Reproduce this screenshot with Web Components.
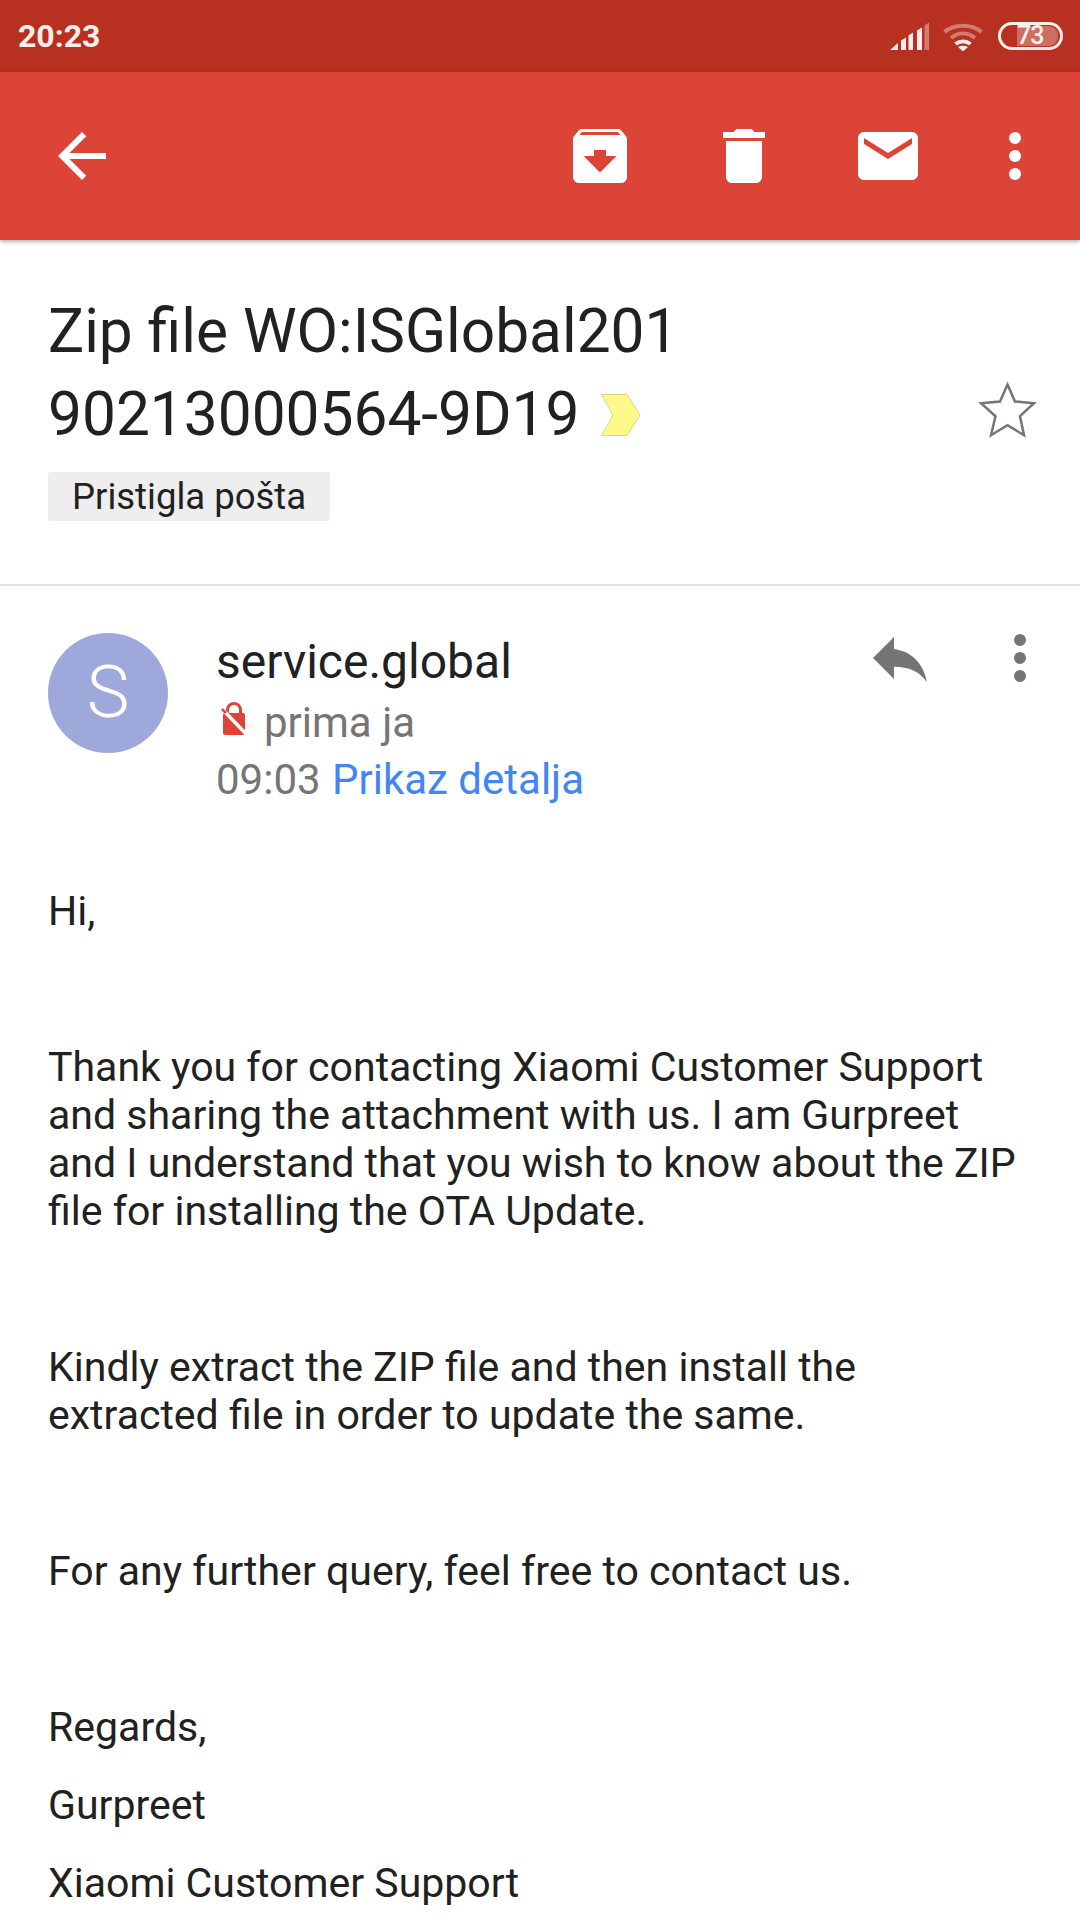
<!DOCTYPE html>
<html><head><meta charset="utf-8"><style>
html,body{margin:0;padding:0;background:#fff;width:1080px;height:1920px;overflow:hidden}
body{font-family:Roboto,"Liberation Sans",sans-serif}
</style></head><body>
<mail-screen></mail-screen>
<script>
const def=(n,html)=>customElements.define(n,class extends HTMLElement{constructor(){super();this.attachShadow({mode:'open'}).innerHTML=html}});
const dots=(c)=>`<svg width="72" height="72" viewBox="0 0 72 72" fill="${c}"><circle cx="36" cy="18" r="6"/><circle cx="36" cy="36" r="6"/><circle cx="36" cy="54" r="6"/></svg>`;
def('status-bar',`<style>
:host{display:flex;align-items:center;height:72px;background:#b8301f;color:#fbeeec;box-sizing:border-box;padding:0 17px 0 18px}
.t{font:700 32px Roboto,sans-serif;flex:1}
svg{display:block}
.sig{margin-right:13px}.wifi{margin-right:15px}
.bat{position:relative;width:65px;height:28px;box-sizing:border-box;border:3px solid #fbeeec;border-radius:14px}
.bat i{position:absolute;left:16px;right:2px;top:1px;bottom:1px;background:rgba(255,255,255,.3);border-radius:0 9px 9px 0}
.bat b{position:absolute;left:16px;top:1px;font:500 25px/20px Roboto,sans-serif;letter-spacing:-1px;color:#fbeeec}
</style><span class="t">20:23</span>
<svg class="sig" width="40" height="30" viewBox="0 0 40 30" fill="#fbeeec"><path d="M0 29l8-7v7zM11 19.500l5-3V29h-5zM18.500 14.500l4.500-3V29h-4.500zM27 9.500l5-3V29h-5z"/><path d="M34.500 4.500l4.500-3V29h-4.500z" fill-opacity=".4"/></svg>
<svg class="wifi" width="40" height="30" viewBox="0 0 40 30" fill="none" stroke="#fbeeec" stroke-width="4"><path d="M1.500 11C11 2.500 29 2.500 38.500 11" stroke-opacity=".4"/><path d="M8 17c7.500-6 16.500-6 24 0" stroke-opacity=".4"/><path d="M12.500 23c4.500-3.500 10.500-3.500 15 0"/><path d="M20 30.500l-5-4.500c3-1.700 7-1.700 10 0z" fill="#fbeeec" stroke="none"/></svg>
<span class="bat"><i></i><b>73</b></span>`);
def('tool-bar',`<style>
:host{display:flex;align-items:center;height:168px;background:#dd4438;padding-left:46px;padding-right:29px;box-sizing:border-box;position:relative;box-shadow:0 2px 4px rgba(0,0,0,.3)}
svg{display:block;flex:none}.s{flex:1}.g{margin-left:72px}.m{margin-left:55px}
</style>
<svg width="72" height="72" viewBox="0 0 24 24" fill="#fff"><path d="M20 11H7.830l5.590-5.590L12 4l-8 8 8 8 1.410-1.410L7.830 13H20v-2z"/></svg><span class="s"></span>
<svg width="72" height="72" viewBox="0 0 24 24" fill="#fff"><path d="M20.540 5.230l-1.390-1.680C18.880 3.210 18.470 3 18 3H6c-.47 0-.88.21-1.160.55L3.460 5.230C3.170 5.570 3 6.020 3 6.500V19c0 1.100.9 2 2 2h14c1.100 0 2-.9 2-2V6.500c0-.48-.17-.93-.46-1.270zM12 17.500L6.500 12H10v-2h4v2h3.500L12 17.500zM5.120 5l.81-1h12l.94 1H5.120z"/></svg>
<svg class="g" width="72" height="72" viewBox="0 0 24 24" fill="#fff"><path d="M6 19c0 1.100.9 2 2 2h8c1.100 0 2-.9 2-2V7H6v12zM19 4h-3.500l-1-1h-5l-1 1H5v2h14V4z"/></svg>
<svg class="g" width="72" height="72" viewBox="0 0 24 24" fill="#fff"><path d="M20 4H4c-1.100 0-1.990.9-1.990 2L2 18c0 1.100.9 2 2 2h16c1.100 0 2-.9 2-2V6c0-1.100-.9-2-2-2zm0 4l-8 5-8-5V6l8 5 8-5v2z"/></svg>
<span class="m">${dots('#fff')}</span>`);
def('subject-head',`<style>
:host{display:flex;box-sizing:border-box;height:346px;padding:50px 0 0 48px;border-bottom:2px solid #e0e0e0;position:relative}
.l{flex:1;min-width:0}
.t{font:400 60.400px/83px Roboto,sans-serif;color:#212121;width:640px}
.c{display:inline-block;vertical-align:-1px;margin-left:7px}
.tag{display:inline-block;margin-top:16px;background:#eeeeee;border-radius:3px;height:49px;padding:0 24px;font:400 36.500px/49px Roboto,sans-serif;color:#212121}
.star{margin:90px 42px 0 0;flex:none}
</style><div class="l"><div class="t">Zip file WO:ISGlobal201<wbr>90213000564-9D19 <svg class="c" width="40" height="42" viewBox="0 0 40 42"><path d="M.5.500H26L39 21 26 41.500H.5L12 21z" fill="#fff98c" stroke="#dcd67c"/></svg></div><span class="tag">Pristigla pošta</span></div>
<svg class="star" width="60" height="60" viewBox="0 0 60 60" fill="none" stroke="#757575" stroke-width="2.500"><path d="M29.500 4.500L37 21.500l19 1.700-14 13 4 19-16.500-10-16.500 10 4.500-19L3 23.200l19-1.700z"/></svg>`);
def('sender-row',`<style>
:host{display:flex;position:relative;padding:47px 0 0 48px;box-sizing:border-box;height:220px}
.a{width:120px;height:120px;border-radius:50%;background:#9fa8da;color:#fff;font:300 72px/120px Roboto,sans-serif;text-align:center;flex:none}
.i{margin-left:49px;flex:1;min-width:0;padding-top:1px}
.n{font:400 48px/56px Roboto,sans-serif;color:#212121;margin-left:-1px}
.r{font:400 42px/56px Roboto,sans-serif;color:#757575;display:flex;align-items:center;margin-top:5px}
.r svg{margin:0 14px 8px 3px}
a{color:#4285f4;text-decoration:none}
.d{font:400 42px/56px Roboto,sans-serif;color:#757575;margin:1px 0 0 -1px}
.d a{margin-left:1px}
.act{display:flex;flex:none;margin:-11px 24px 0 0;align-self:flex-start}
svg{display:block}
</style><div class="a">S</div><div class="i"><div class="n">service.global</div><div class="r"><svg width="30" height="36" viewBox="0 0 30 36"><rect x="3" y="12" width="22" height="22" rx="2" fill="#dd4438"/><path d="M7.500 13V9a6.500 6.500 0 0 1 13 0v4" fill="none" stroke="#dd4438" stroke-width="3"/><path d="M5 11l23 24" stroke="#fff" stroke-width="3.500"/><path d="M2 8l4 4" stroke="#dd4438" stroke-width="2.500"/></svg>prima ja</div><div class="d">09:03 <a>Prikaz detalja</a></div></div>
<div class="act"><svg width="72" height="72" viewBox="0 0 24 24" fill="#757575" style="margin-right:48px"><path d="M10 9V5l-7 7 7 7v-4.100c5 0 8.500 1.600 11 5.100-1-5-4-10-11-11z"/></svg>${dots('#757575')}</div>`);
def('mail-body',`<style>
:host{display:block;padding:81px 55px 0 48px;font:400 41.040px/48px Roboto,sans-serif;color:#212121}
p{margin:0 0 108px}
div{margin-bottom:30px}
</style><p>Hi,</p><p>Thank you for contacting Xiaomi Customer Support and sharing the attachment with us. I am Gurpreet and I understand that you wish to know about the ZIP file for installing the OTA Update.</p><p>Kindly extract the ZIP file and then install the extracted file in order to update the same.</p><p>For any further query, feel free to contact us.</p><div>Regards,</div><div>Gurpreet</div><div>Xiaomi Customer Support</div>`);
def('mail-screen',`<style>:host{display:block;width:1080px;height:1920px;overflow:hidden;background:#fff}</style><status-bar></status-bar><tool-bar></tool-bar><subject-head></subject-head><sender-row></sender-row><mail-body></mail-body>`);
</script></body></html>
